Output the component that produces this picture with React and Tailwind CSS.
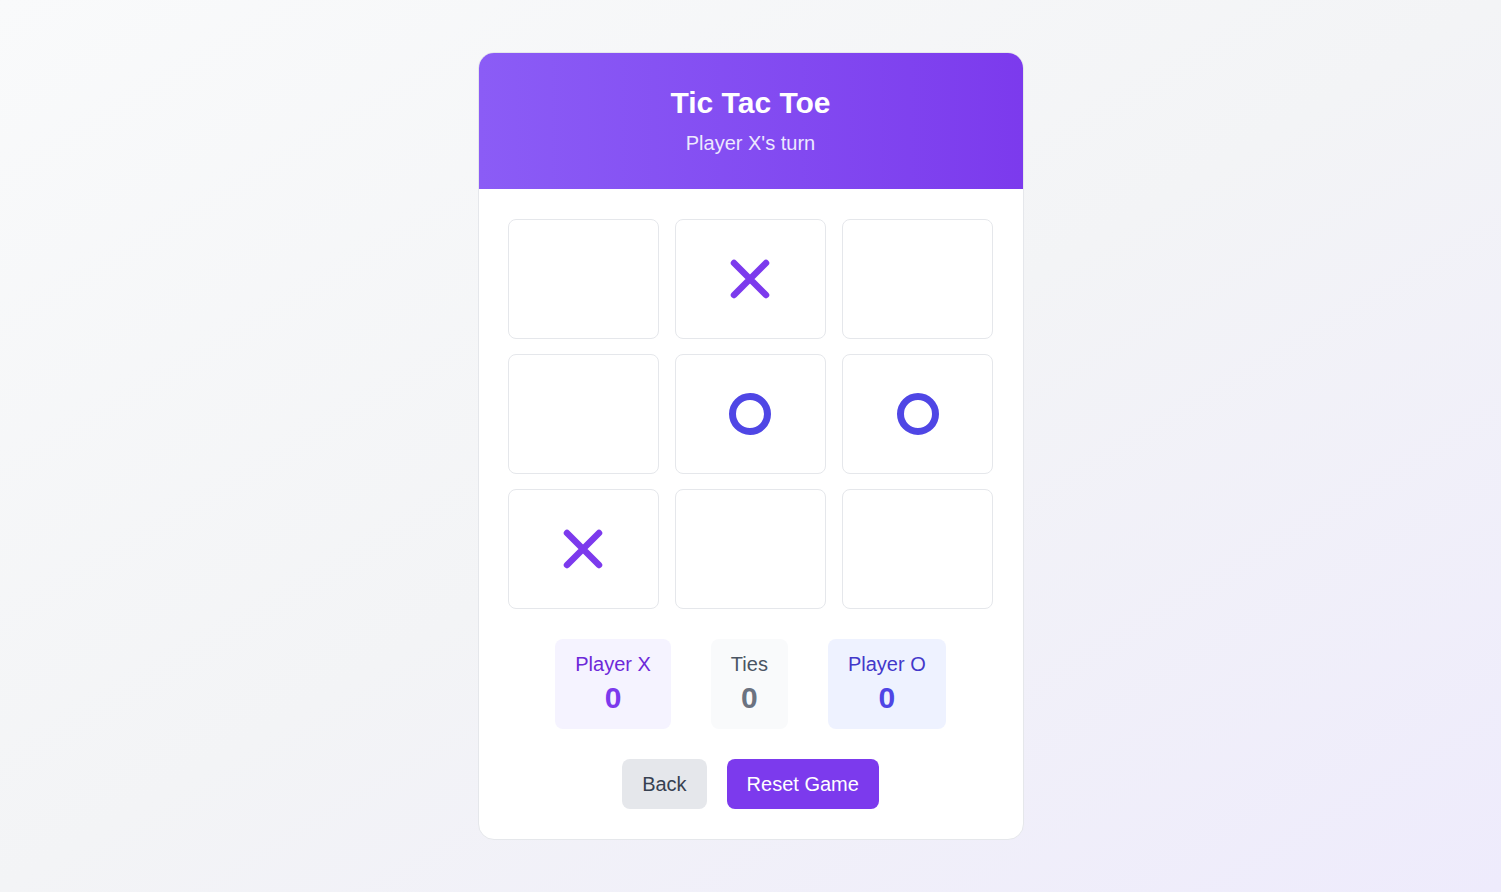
import React from "react";

function XMark() {
  return (
    <svg width="40" height="40" viewBox="0 0 40 40" fill="none">
      <path d="M4 4 L36 36 M36 4 L4 36" stroke="#7c3aed" strokeWidth="6.5" strokeLinecap="round" />
    </svg>
  );
}

function OMark() {
  return (
    <svg width="44" height="44" viewBox="0 0 44 44" fill="none">
      <circle cx="22" cy="22" r="17.5" stroke="#4f46e5" strokeWidth="7" />
    </svg>
  );
}

const board = ["", "X", "", "", "O", "O", "X", "", ""];

export default function App() {
  return (
    <div
      className="min-h-screen w-full flex items-center justify-center bg-gradient-to-br from-[#f9fafb] via-[#f3f4f6] to-[#eeebfc]"
      style={{ fontFamily: '"Liberation Sans", Arial, sans-serif' }}
    >
      <div className="w-[546px] bg-white rounded-2xl border border-[#e5e7eb] overflow-hidden">
        <div className="bg-gradient-to-r from-[#8b5cf6] to-[#7c3aed] py-8 text-center">
          <h1 className="text-3xl font-bold text-white leading-9">Tic Tac Toe</h1>
          <p className="mt-2 text-xl leading-7 text-[#ede9fe]">Player X's turn</p>
        </div>
        <div className="px-[29px] pt-[30px] pb-[30px]">
          <div className="grid grid-cols-3 gap-x-4 gap-y-[15px]">
            {board.map((c, i) => (
              <div
                key={i}
                className="h-[120px] rounded-lg border border-[#e5e7eb] bg-white flex items-center justify-center"
              >
                {c === "X" && <XMark />}
                {c === "O" && <OMark />}
              </div>
            ))}
          </div>
          <div className="mt-[30px] flex justify-center gap-10">
            <div className="rounded-lg bg-[#f5f3ff] px-5 pt-[11px] pb-[13px] text-center">
              <div className="text-xl leading-7 text-[#6d28d9]">Player X</div>
              <div className="mt-[2px] text-3xl leading-9 font-bold text-[#7c3aed]">0</div>
            </div>
            <div className="rounded-lg bg-[#f9fafb] px-5 pt-[11px] pb-[13px] text-center">
              <div className="text-xl leading-7 text-[#4b5563]">Ties</div>
              <div className="mt-[2px] text-3xl leading-9 font-bold text-[#6b7280]">0</div>
            </div>
            <div className="rounded-lg bg-[#eef2ff] px-5 pt-[11px] pb-[13px] text-center">
              <div className="text-xl leading-7 text-[#4338ca]">Player O</div>
              <div className="mt-[2px] text-3xl leading-9 font-bold text-[#4f46e5]">0</div>
            </div>
          </div>
          <div className="mt-[30px] flex justify-center gap-5">
            <button className="rounded-lg bg-[#e5e7eb] px-5 py-[11px] text-xl leading-7 text-[#374151]">
              Back
            </button>
            <button className="rounded-lg bg-[#7c3aed] px-5 py-[11px] text-xl leading-7 text-white">
              Reset Game
            </button>
          </div>
        </div>
      </div>
    </div>
  );
}
